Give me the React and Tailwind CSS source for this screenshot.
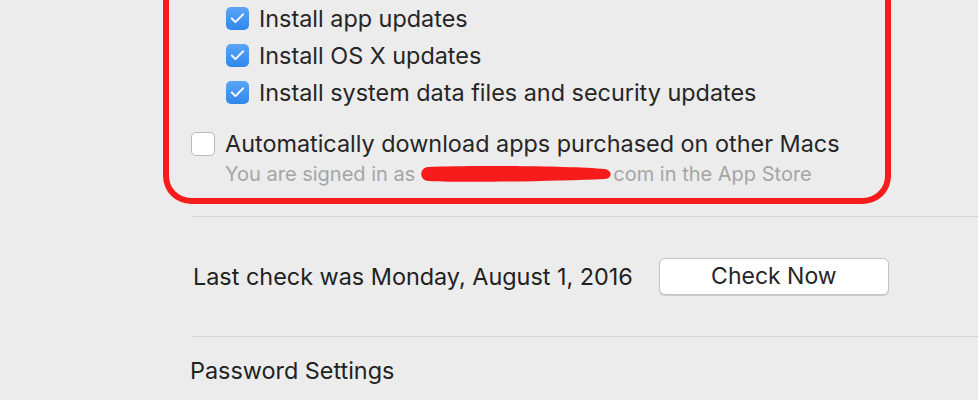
import { Check } from 'lucide-react';

const font = { fontFamily: 'Inter, "Liberation Sans", sans-serif' };

const Checkbox = ({ checked }) =>
  checked ? (
    <div className="w-[23px] h-[23px] rounded-[5px] bg-gradient-to-b from-[#5aa6f7] to-[#2f86ec] flex items-center justify-center shrink-0">
      <Check size={17} strokeWidth={2.6} className="text-white" />
    </div>
  ) : (
    <div className="w-[24px] h-[24px] rounded-[5px] bg-white border border-[#b9b9b9] shrink-0" />
  );

const Row = ({ label }) => (
  <div className="h-[37px] flex items-center gap-[10px] pl-[57px]">
    <Checkbox checked />
    <span className="text-[23.4px] text-[#262626]">{label}</span>
  </div>
);

const App = () => {
  return (
    <div className="w-[978px] h-[400px] bg-[#ececec] overflow-hidden" style={font}>
      {/* Annotated section */}
      <div className="ml-[163px] w-[728px] border-[6px] border-t-0 border-[#f71b1b] rounded-b-[28px] pb-[12px]">
        <Row label="Install app updates" />
        <Row label="Install OS X updates" />
        <Row label="Install system data files and security updates" />

        <div className="mt-[15px] h-[36px] flex items-center gap-[10px] pl-[22px]">
          <Checkbox />
          <span className="text-[23.4px] text-[#262626]">Automatically download apps purchased on other Macs</span>
        </div>
        <div className="pl-[56px] h-[24px] flex items-center text-[20px] text-[#a5a5a5] whitespace-nowrap">
          <span>You are signed in as</span>
          <svg width="194" height="20" viewBox="0 0 194 20" className="ml-[4px] shrink-0">
            <path d="M9 3 C 50 1, 150 2, 186 5 C 193 6, 194 14, 186 15 C 140 17, 50 19, 9 17 C 0 16, 0 4, 9 3 Z" fill="#f71b1b" />
          </svg>
          <span>com in the App Store</span>
        </div>
      </div>

      <div className="ml-[193px] mt-[12px] border-t border-[#d4d4d4]" />

      <div className="h-[119px] flex items-center pl-[193px] gap-[26px]">
        <span className="text-[23.4px] text-[#222]">Last check was Monday, August 1, 2016</span>
        <button className="w-[230px] h-[37px] bg-white rounded-[6px] border border-[#c4c4c4] shadow-[0_1px_1px_rgba(0,0,0,0.15)] text-[23px] text-[#262626]">
          Check Now
        </button>
      </div>

      <div className="ml-[193px] border-t border-[#d4d4d4]" />

      <div className="pl-[190px] pt-[16px] text-[23.4px] text-[#222]">Password Settings</div>
    </div>
  );
};

export default App;
